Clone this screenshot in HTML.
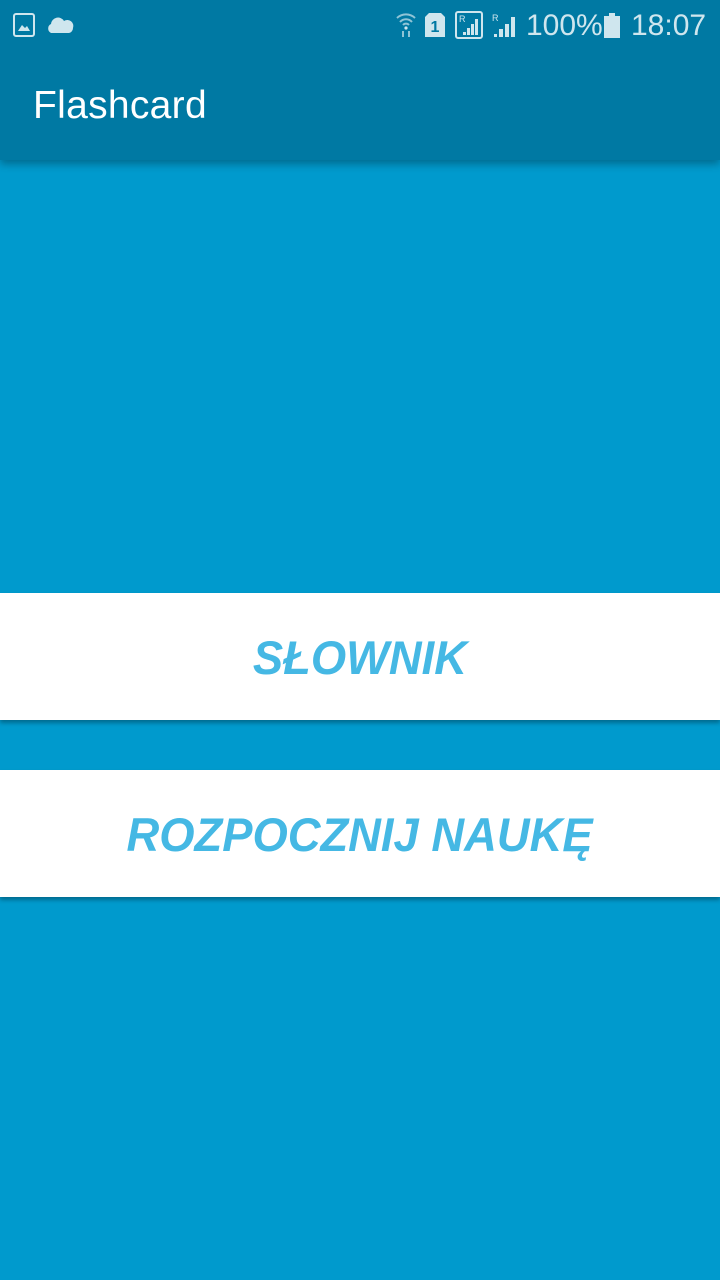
<!DOCTYPE html>
<html><head><meta charset="utf-8"><style>
body{margin:0;width:720px;height:1280px;background:#009acd;font-family:"Liberation Sans",sans-serif;overflow:hidden;position:relative}
.bar{position:absolute;left:0;top:0;width:720px;height:160px;background:#0079a3;box-shadow:0 4px 8px rgba(0,0,0,.3)}
.title{position:absolute;left:33px;top:84px;color:#fff;font-size:39px;line-height:44px;letter-spacing:.3px}
.st{position:absolute;top:8px;color:#cfe6ee;font-size:30px;line-height:36px}
.btn{position:absolute;left:0;width:720px;height:127px;background:#fff;box-shadow:0 3px 4px rgba(0,0,0,.3);text-align:center;line-height:130px;color:#45b8e4;font-weight:bold;font-style:italic;font-size:47px}
.btn span{display:inline-block;transform:scaleX(.965)}
</style></head><body>
<div class="bar">
<svg style="position:absolute;left:13px;top:13px" width="22" height="24"><rect x="1" y="1" width="20" height="22" rx="2" fill="none" stroke="#cfe6ee" stroke-width="2"/><path d="M5 18 L9 12 L12 15 L14 13 L17 18Z" fill="#cfe6ee"/></svg>
<svg style="position:absolute;left:45px;top:14px" width="30" height="20"><path d="M6 19 A5 5 0 0 1 6 10 A7 7 0 0 1 19 7 A6 6 0 0 1 28 14 A5 5 0 0 1 24 19Z" fill="#cfe6ee"/></svg>
<svg style="position:absolute;left:396px;top:12px" width="20" height="26"><path d="M1 6 A13 13 0 0 1 19 6 M4 10 A8 8 0 0 1 16 10 M7 13 A4 4 0 0 1 13 13" stroke="#8fc4d6" stroke-width="2" fill="none"/><circle cx="10" cy="16" r="1.6" fill="#cfe6ee"/><path d="M7 19v6M13 19v6" stroke="#8fc4d6" stroke-width="2"/></svg>
<svg style="position:absolute;left:425px;top:13px" width="20" height="24"><path d="M4 0h12l4 4v20H0V4z" fill="#cfe6ee"/><text x="10" y="19" font-size="16" font-weight="bold" text-anchor="middle" fill="#0079a3" font-family="Liberation Sans">1</text></svg>
<svg style="position:absolute;left:455px;top:11px" width="28" height="28"><rect x="1" y="1" width="26" height="26" rx="2" fill="none" stroke="#cfe6ee" stroke-width="2"/><text x="4" y="11" font-size="9" fill="#cfe6ee" font-family="Liberation Sans">R</text><path d="M8 24h3v-3h-3zM12 24h3v-7h-3zM16 24h3v-11h-3zM20 24h3v-16h-3z" fill="#cfe6ee"/></svg>
<svg style="position:absolute;left:492px;top:11px" width="26" height="28"><text x="0" y="10" font-size="9" fill="#cfe6ee" font-family="Liberation Sans">R</text><path d="M2 26h3v-3h-3zM7 26h4v-8h-4zM13 26h4v-13h-4zM19 26h4v-20h-4z" fill="#cfe6ee"/></svg>
<div class="st" style="left:526px">100%</div>
<svg style="position:absolute;left:604px;top:13px" width="16" height="25"><rect x="5" y="0" width="6" height="3" fill="#cfe6ee"/><rect x="0" y="3" width="16" height="22" fill="#cfe6ee"/></svg>
<div class="st" style="left:631px">18:07</div>
<div class="title">Flashcard</div>
</div>
<div class="btn" style="top:593px"><span>SŁOWNIK</span></div>
<div class="btn" style="top:770px"><span>ROZPOCZNIJ NAUKĘ</span></div>
</body></html>
